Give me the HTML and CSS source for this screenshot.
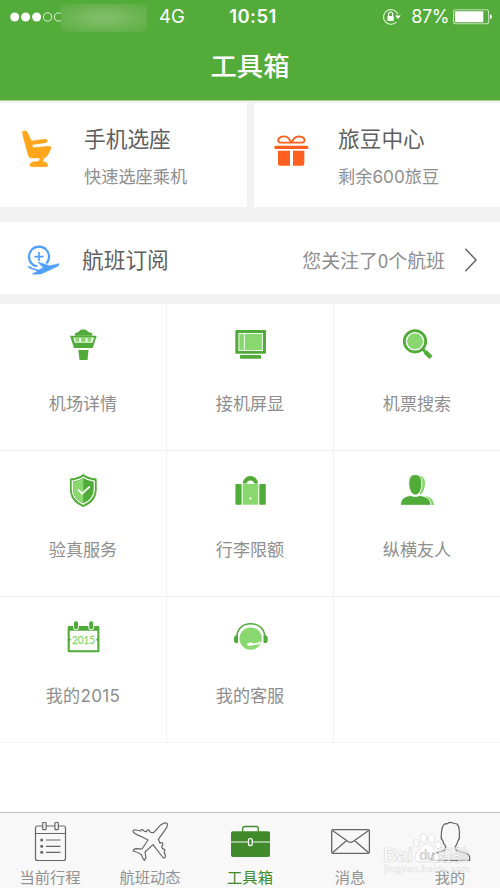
FILE: index.html
```html
<!DOCTYPE html>
<html lang="zh-CN">
<head>
<meta charset="utf-8">
<title>工具箱</title>
<link rel="stylesheet" href="styles.css">
</head>
<body>
<div class="app">
  <header class="header">
    <div class="status">
      <div class="status-left">
        <svg class="signal" width="53" height="12" viewBox="0 0 53 12"><g fill="#fff"><circle cx="4.700" cy="6" r="4.500"/><circle cx="15.600" cy="6" r="4.500"/><circle cx="26.600" cy="6" r="4.500"/></g><g fill="none" stroke="#e4f2df"><circle cx="37.600" cy="6" r="4.100"/><circle cx="48.600" cy="6" r="4.100"/></g></svg>
        <span class="carrier"></span>
        <span class="network">4G</span>
      </div>
      <span class="time">10:51</span>
      <div class="status-right">
        <svg class="lock" width="20" height="18" viewBox="0 0 20 18"><path d="M15.800 6.300A7.400 7.400 0 1 0 14.500 13.800" fill="none" stroke="#d9edd2" stroke-width="1.200"/><path d="M13.200 7.600h5.600L16 11.100z" fill="#fff"/><path d="M5.500 8h6.200v5H5.500z" fill="#fff"/><path d="M6.600 8V6a2 2 0 0 1 4 0v2" fill="none" stroke="#fff" stroke-width="1.200"/></svg>
        <span class="percent">87%</span>
        <svg class="battery" width="40" height="16" viewBox="0 0 40 16"><rect x=".6" y=".7" width="35" height="14" rx="2" fill="none" stroke="#c3e0b9" stroke-width="1.100"/><rect x="2" y="2.200" width="28.300" height="11" rx=".8" fill="#fff"/><path d="M37 5.200q2 .8 2 2.500t-2 2.500z" fill="#fff"/></svg>
      </div>
    </div>
    <h1 class="title">工具箱</h1>
  </header>

  <section class="cards">
    <div class="card seat-card">
      <svg width="36" height="40" viewBox="0 0 108 120"><path d="M7 14Q7 9 12 9h5q4 0 5 4l12 26 38-5q9-1 10 4 0 5-6 6l-40 6 3 9 48-4q8 0 6 6l-6 13q-6 13-15 16l-4 11 9 2q6 2 6 9 0 4-5 4H35q-6 0-5-5 1-8 8-9l18-2 5-10H36q-9 0-11-7L12 35z" fill="#ffa61d" stroke="#ffa61d" stroke-width="1.500"/></svg>
      <div class="card-text"><h2>手机选座</h2><p>快速选座乘机</p></div>
    </div>
    <div class="card bean-card">
      <svg width="38" height="40" viewBox="0 0 114 120"><g fill="#ff601f"><rect x="7" y="41" width="102" height="10" rx="4"/><path d="M18 56h36v45H24q-6 0-6-6zM63 56h34v39q0 6-6 6H63z"/></g><path d="M56 31C51 14 40 12 31 14 16 17 14 30 26 32M60 31C65 14 75 12 86 14c14 3 16 16 4 18M24 32h68" fill="none" stroke="#ff601f" stroke-width="5.500"/></svg>
      <div class="card-text"><h2>旅豆中心</h2><p>剩余600旅豆</p></div>
    </div>
  </section>

  <section class="subscribe">
    <svg class="subscribe-icon" width="34" height="34" viewBox="0 0 102 102"><g fill="none" stroke="#4f9ffb"><circle cx="39" cy="41" r="30" stroke-width="6.500"/><path d="M39 27v28M25 41h28" stroke-width="5"/></g><path d="M3 68l20 7 18-3-13-14 10-3 33 12 27-7v10L49 93H21l13-9L8 77z" fill="#fff" stroke="#fff" stroke-width="4"/><path d="M5 71q9 8 21 9l8 6q-11 3-15 7 14 2 28-1l48-22q5-3 4-8l-28 6-36-11 17 17-14 7-20-6q-4-5-13-4z" fill="#4f9ffb" stroke="#4f9ffb" stroke-width="1.500"/></svg>
    <h2>航班订阅</h2>
    <span class="subscribe-count">您关注了0个航班</span>
    <svg class="chevron" width="14" height="26" viewBox="0 0 14 26"><path d="M1.300 1.700L12 13 1.300 24.300" fill="none" stroke="#666" stroke-width="1.500"/></svg>
  </section>

  <section class="grid">
    <div class="tile">
      <svg class="tile-icon" viewBox="0 0 40 40"><path d="M15.300 7q1.500-2.700 5-2.700t5 2.700l4 1.300v2.500H12V8.300z" fill="#51ab38"/><path d="M7 10.700h26.700L29.700 23H11z" fill="#51ab38"/><path d="M10.300 12.500H31l-1.500 5.200H11.800z" fill="#edf9e9"/><path d="M12 12.500h4v4.300h-3zM18 12.500h4.700v4.300H18zM24.500 12.500h4l-.8 4.300h-3.200z" fill="#88d86f"/><path d="M15.300 25h10.200l-1 10h-8z" fill="#51ab38"/></svg>
      <span>机场详情</span>
    </div>
    <div class="tile">
      <svg class="tile-icon" viewBox="0 0 40 40"><rect x="5.300" y="5" width="30.700" height="23.700" rx="1" fill="#51ab38"/><rect x="8.900" y="8.500" width="23.500" height="17" fill="#88d86f" stroke="#f2fbef"/><path d="M14.400 8.500v17" stroke="#f2fbef"/><rect x="10" y="30" width="21" height="3.700" rx=".7" fill="#51ab38"/></svg>
      <span>接机屏显</span>
    </div>
    <div class="tile">
      <svg class="tile-icon" viewBox="0 0 40 40"><circle cx="18" cy="16.300" r="10.700" fill="#fff" stroke="#51ab38" stroke-width="2.800"/><circle cx="18" cy="16.300" r="8" fill="#88d86f"/><path d="M25.500 24l3 3" stroke="#51ab38" stroke-width="3"/><path d="M28.300 26.800l5.700 5.700" stroke="#51ab38" stroke-width="4.500"/></svg>
      <span>机票搜索</span>
    </div>
    <div class="tile">
      <svg class="tile-icon" viewBox="0 0 40 40"><path d="M20.300 3q5.200 4 12 4.300 1.400.1 1.400 1.500v9.500Q33.700 31 20.300 36 7 31 7 18.300V8.800q0-1.400 1.400-1.500 6.700-.3 11.900-4.300z" fill="#51ab38"/><path d="M20.300 6.300q4.700 3.300 11 3.800v8.500q0 9.600-11 14.500-11-4.900-11-14.500v-8.500q6.300-.5 11-3.800z" fill="#51ab38" stroke="#fff" stroke-width="1.200"/><path d="M20.300 7v25.300q-10.200-4.800-10.200-13.900v-7.500q5.800-.6 10.200-3.900z" fill="#88d86f"/><path d="M15 18.500l4 4.200 7.700-7" fill="none" stroke="#fff" stroke-width="1.800"/></svg>
      <span>验真服务</span>
    </div>
    <div class="tile">
      <svg class="tile-icon" viewBox="0 0 40 40"><path d="M12.800 12.500a7.600 7.600 0 0 1 15.200 0h-4a3.600 3 0 0 0-7.200 0z" fill="#51ab38"/><rect x="5.400" y="13" width="6.200" height="20.700" rx="1" fill="#51ab38"/><rect x="29.300" y="13" width="6.500" height="20.700" rx="1" fill="#51ab38"/><path d="M12.600 13h15.700v20.700H12.600z" fill="#88d86f"/><circle cx="20.400" cy="27.400" r="1.100" fill="#fff"/></svg>
      <span>行李限额</span>
    </div>
    <div class="tile">
      <svg class="tile-icon" viewBox="0 0 40 40"><path d="M22 4.500c4 .3 6.300 3.500 6 8.500s-2 9-5 11M28 24.800q8.500 1.500 9.300 9.200H34" fill="#88d86f"/><g fill="#51ab38" stroke="#fff" stroke-width=".9"><path d="M18.300 3.600c4.200 0 6.500 2.800 6.500 8.500 0 7-2.800 12-6.500 12s-6.500-5-6.500-12c0-5.700 2.300-8.500 6.500-8.500z"/><path d="M3.600 34.300c0-6 2.500-8.400 9.400-9.800q5.200 1.800 10.500 0c7 1.400 10.300 3.800 10.300 9.800z"/></g></svg>
      <span>纵横友人</span>
    </div>
    <div class="tile">
      <svg class="tile-icon" viewBox="0 0 40 40"><rect x="5.700" y="10" width="29.700" height="24.300" rx=".6" fill="#fff" stroke="#51ab38" stroke-width="2.100"/><path d="M5 9.300h31v4.500H5zM6 21.300l2.300 1.500L6 24.300zM35 21.300l-2.300 1.500 2.300 1.500z" fill="#51ab38"/><rect x="10.500" y="3.800" width="5" height="9" rx="2.300" fill="#51ab38" stroke="#fff"/><rect x="25.700" y="3.800" width="5" height="9" rx="2.300" fill="#51ab38" stroke="#fff"/><text class="year" x="9" y="27.200" textLength="23" lengthAdjust="spacingAndGlyphs">2015</text></svg>
      <span class="wide">我的2015</span>
    </div>
    <div class="tile">
      <svg class="tile-icon" viewBox="0 0 40 40"><path d="M6.600 20.500C7 11.500 13 6.700 20.800 6.700S34.600 11.500 35 20.500" fill="none" stroke="#51ab38" stroke-width="1.600"/><path d="M8 18v8H6q-2 0-2-2v-3q0-3 4-3zM33.500 18v8h2q2.200 0 2.200-2v-3q0-3-4.200-3z" fill="#51ab38"/><circle cx="20.700" cy="21.600" r="11.200" fill="#88d86f"/><path d="M17 27.300q0-1.700 3.500-1.700 2 0 3 .8 5-.6 8-1.900l-1.500 2.800-6.500.8q-1 1-3 1-3.500 0-3.500-1.800z" fill="#fff"/></svg>
      <span>我的客服</span>
    </div>
    <div class="tile"></div>
  </section>

  <nav class="tabs">
    <div class="tab">
      <svg class="tab-icon" viewBox="0 0 48 44"><g fill="none" stroke="#666" stroke-width="1.200"><rect x="9.500" y="6" width="30" height="34.500" rx="2"/><path d="M9.500 13.500h30M20 20h14.500M20 26.300h14.500M20 32.300h14.500"/><g fill="#f8f8f8"><rect x="16.700" y="2.500" width="3.400" height="7.200" rx=".7"/><rect x="28.900" y="2.500" width="3.400" height="7.200" rx=".7"/></g></g><g fill="#666"><circle cx="15.700" cy="20" r="1.500"/><circle cx="15.700" cy="26.300" r="1.500"/><circle cx="15.700" cy="32.300" r="1.500"/></g></svg>
      <span>当前行程</span>
    </div>
    <div class="tab">
      <svg class="tab-icon" viewBox="0 0 144 132"><path d="M105 14Q118 6 123 10 127 15 118 29L97 58l5 12q6-5 8 0t-3 9l3 8q7-1 7 5l-3 4 4 10q1 8-6 8L81 74 57 96l3 17-5 8q-4-3-9-17-9-7-24-11 0-7 10-7l16 1 18-27-22-11Q24 42 21 34q0-6 9-4l14 3q0-5 6-4l5 5 7 1q0-6 6-5l6 7 9 1z" fill="none" stroke="#666" stroke-width="3.600" stroke-linejoin="round"/></svg>
      <span>航班动态</span>
    </div>
    <div class="tab active">
      <svg class="tab-icon" viewBox="0 0 48 44"><path d="M16.700 12V8.500q0-2 2-2h11.600q2 0 2 2V12" fill="none" stroke="#418a2b" stroke-width="1.300"/><rect x="5" y="11.300" width="39" height="25.700" rx="2" fill="#418a2b"/><path d="M5 22h39" stroke="#f8f8f8"/><rect x="22.500" y="18.700" width="3.700" height="6.800" rx="1.200" fill="#418a2b" stroke="#f8f8f8" stroke-width="1.300"/></svg>
      <span>工具箱</span>
    </div>
    <div class="tab">
      <svg class="tab-icon" viewBox="0 0 48 44"><g fill="none" stroke="#666" stroke-width="1.300"><rect x="5.700" y="9.700" width="37.700" height="23.700" rx="1.300"/><path d="M6.500 10.500L22 21.500q2.500 1.700 5 0L42.700 10.500M6.500 32.700l13.800-12M42.700 32.700l-14-12"/></g></svg>
      <span>消息</span>
    </div>
    <div class="tab">
      <svg class="tab-icon" viewBox="0 0 144 132"><path d="M16 121v-8q0-9 10-12l28-9q6-3 5-13-7-7-9-18-6-3-4-14 0-28 10-35l8-1q8-6 16-2l13 3q9 10 7 35 2 10-4 15-2 10-8 18-1 8 5 12l28 9q10 3 10 12v8z" fill="none" stroke="#666" stroke-width="3.800" stroke-linejoin="round"/></svg>
      <span>我的</span>
    </div>
    <div class="watermark">
      <svg width="92" height="46" viewBox="0 0 92 46"><g class="mark"><ellipse cx="34.500" cy="13" rx="3" ry="4"/><ellipse cx="41.500" cy="8" rx="3.200" ry="4.300"/><ellipse cx="49.500" cy="8.500" rx="3.200" ry="4.300"/><ellipse cx="56" cy="15" rx="3" ry="4"/><path d="M45 14c5 0 6 5 10 9 5 6 1 11-5 9q-5-1-10 0c-6 1-10-4-5-10 4-3 5-8 10-8z"/><text x="1" y="32" font-size="20" textLength="30">Bai</text><text x="56" y="31" font-size="15.500">经验</text><text class="mark-url" x="2" y="42" font-size="9.500" textLength="86">jingyan.baidu.com</text></g><text class="mark-du" x="37" y="30" font-size="14" textLength="16">du</text></svg>
    </div>
  </nav>
</div>
</body>
</html>
```
FILE: styles.css
```css
* { box-sizing: border-box; }
body { margin: 0; background: #fff; font-family: Inter, "Noto Sans CJK SC", sans-serif; }
h1, h2, p { margin: 0; font-weight: 400; }
svg { display: block; flex: none; }

.app { width: 500px; height: 888px; display: flex; flex-direction: column; overflow: hidden; }

.header { height: 101px; background: #53ab39; border-bottom: 1px solid #a3d093; color: #fff; }
.status { height: 33px; display: grid; grid-template-columns: 200px 1fr 200px; align-items: center; font-size: 18.500px; line-height: 33px; }
.status-left { display: flex; align-items: center; padding-left: 10px; }
.carrier { width: 86px; height: 28px; margin: 3px 0 0 -2px; background: radial-gradient(ellipse at center, #82c06d 0%, #72b759 45%, #58ac3f 100%); }
.network { margin-left: 12px; }
.time { text-align: center; font-weight: 600; font-size: 18.500px; letter-spacing: .4px; padding-left: 6px; }
.status-right { display: flex; align-items: center; justify-content: flex-end; padding-right: 7px; }
.lock { margin-right: 9px; }
.percent { margin-right: 4px; font-size: 18px; letter-spacing: -.4px; }
.title { text-align: center; font-size: 26.300px; line-height: 67px; font-weight: 500; }

.cards { display: grid; grid-template-columns: 247px 246px; column-gap: 7px; padding: 2px 0 15px; background: #f2f2f2; }
.card { height: 104px; display: flex; background: #fff; }
.seat-card { padding: 25px 0 0 20px; }
.seat-card svg { margin-right: 28px; }
.bean-card { padding: 25px 0 0 18px; }
.bean-card svg { margin: 4px 28px 0 0; }
.card h2 { font-size: 21.700px; line-height: 22px; color: #5e5e5e; }
.card p { margin-top: 18px; font-size: 17.200px; line-height: 18px; color: #8e8e8e; }

.subscribe { height: 82px; display: flex; align-items: center; padding: 3px 22px 0 26px; border-bottom: 10px solid #f2f2f2; }
.subscribe h2 { margin-left: 22px; font-size: 21.700px; line-height: 30px; color: #5e5e5e; }
.subscribe-count { margin-left: auto; font-family: "Noto Sans CJK SC", sans-serif; font-size: 18.900px; line-height: 30px; color: #8e8e8e; }
.chevron { margin-left: 19px; }

.grid { display: grid; grid-template-columns: 167px 167px 166px; grid-template-rows: 147px 146px 146px; }
.tile { display: flex; flex-direction: column; align-items: center; padding-top: 20px; border-right: 1px solid #f2f2f2; border-bottom: 1px solid #f2f2f2; font-size: 17.100px; line-height: 20px; color: #8e8e8e; }
.tile:nth-child(-n+3) { padding-top: 21px; }
.tile:nth-child(3n) { border-right: 0; }
.tile-icon { width: 40px; height: 40px; margin-bottom: 29px; }
.wide { letter-spacing: .3px; }
.year { font: 11.500px Lato, sans-serif; fill: #88d86f; stroke: #88d86f; stroke-width: .3; }

.tabs { position: relative; height: 76px; margin-top: auto; display: grid; grid-template-columns: repeat(5, 100px); background: #f8f8f8; border-top: 1px solid #bdbdbd; }
.tab { display: flex; flex-direction: column; align-items: center; padding-top: 7px; font-size: 15.300px; line-height: 18px; color: #929292; }
.tab-icon { width: 48px; height: 44px; margin-bottom: 5px; }
.active { color: #418a2b; }
.watermark { position: absolute; left: 382px; top: 17px; opacity: .75; }
.mark { fill: #fff; stroke: #cfcfcf; stroke-width: .7; font-family: "Liberation Sans", "Noto Sans CJK SC", sans-serif; font-weight: 700; }
.mark-url { font-weight: 400; stroke: #dcdcdc; stroke-width: .5; }
.mark-du { fill: #c8c8c8; font-family: "Liberation Sans", sans-serif; font-weight: 700; }
```
